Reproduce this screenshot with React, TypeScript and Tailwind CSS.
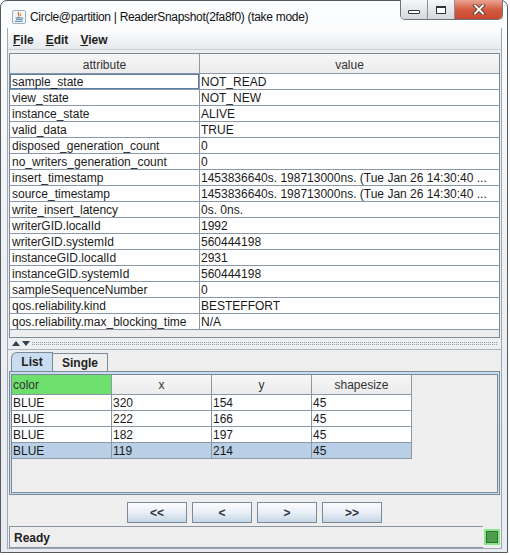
import React from 'react'

// attribute/value pairs of the snapshot
const attributes: [string, string][] = [
  ['sample_state', 'NOT_READ'],
  ['view_state', 'NOT_NEW'],
  ['instance_state', 'ALIVE'],
  ['valid_data', 'TRUE'],
  ['disposed_generation_count', '0'],
  ['no_writers_generation_count', '0'],
  ['insert_timestamp', '1453836640s. 198713000ns. (Tue Jan 26 14:30:40 ...'],
  ['source_timestamp', '1453836640s. 198713000ns. (Tue Jan 26 14:30:40 ...'],
  ['write_insert_latency', '0s. 0ns.'],
  ['writerGID.localId', '1992'],
  ['writerGID.systemId', '560444198'],
  ['instanceGID.localId', '2931'],
  ['instanceGID.systemId', '560444198'],
  ['sampleSequenceNumber', '0'],
  ['qos.reliability.kind', 'BESTEFFORT'],
  ['qos.reliability.max_blocking_time', 'N/A'],
]

const samples = [
  { color: 'BLUE', x: 320, y: 154, size: 45 },
  { color: 'BLUE', x: 222, y: 166, size: 45 },
  { color: 'BLUE', x: 182, y: 197, size: 45 },
  { color: 'BLUE', x: 119, y: 214, size: 45 },
]

function JavaIcon() {
  return (
    <svg width="14" height="14" viewBox="0 0 14 14">
      <rect x="0.5" y="0.5" width="13" height="13" rx="1.5" fill="#f3f6fa" stroke="#9fb0c4" />
      <path d="M6.5 1.8 C4.8 3.4 8.2 4.4 6.3 6.6" stroke="#e2620c" strokeWidth="1.1" fill="none" />
      <path d="M8.6 3 C7.6 4 9.3 4.8 8.2 6" stroke="#e2620c" strokeWidth="0.9" fill="none" />
      <path d="M3.5 7.8 H9.5 M4 9.3 H9 M9.5 7.8 C11.2 7.8 11.2 9.6 9 9.8 M2.8 11.3 H10.8" stroke="#3f6d99" strokeWidth="0.9" fill="none" />
    </svg>
  )
}

function WindowButtons() {
  return (
    <div className="flex h-[20px] -mt-px rounded-b-[5px] border border-t-0 border-[#6f7378] overflow-hidden">
      <div className="w-[27px] flex items-end justify-center pb-[5px] bg-gradient-to-b from-[#f6f7f8] to-[#d3d8de] border-r border-[#8d9196]">
        <div className="w-[12px] h-[4px] border border-[#333] bg-white rounded-[1px]" />
      </div>
      <div className="w-[27px] flex items-center justify-center bg-gradient-to-b from-[#f6f7f8] to-[#d3d8de] border-r border-[#8d9196]">
        <div className="w-[10px] h-[8px] border border-t-2 border-[#333] bg-white" />
      </div>
      <div className="w-[47px] flex items-center justify-center bg-gradient-to-b from-[#eaa594] via-[#d45b43] to-[#c9482f]">
        <svg width="14" height="11" viewBox="0 0 14 11">
          <path d="M3 1.5 L11 9.5 M11 1.5 L3 9.5" stroke="#4a2a22" strokeWidth="3.6" strokeLinecap="square" />
          <path d="M3 1.5 L11 9.5 M11 1.5 L3 9.5" stroke="#ffffff" strokeWidth="2" strokeLinecap="square" />
        </svg>
      </div>
    </div>
  )
}

function MenuBar() {
  return (
    <div className="h-[22px] shrink-0 flex items-center gap-[12px] pl-[5px] pt-[2px] bg-gradient-to-b from-[#ffffff] to-[#e6e9ed] border-b border-[#c8cfd7] text-[12px] font-bold text-[#222]">
      <span><span className="underline">F</span>ile</span>
      <span><span className="underline">E</span>dit</span>
      <span><span className="underline">V</span>iew</span>
    </div>
  )
}

function AttributeTable() {
  return (
    <div className="mx-px mt-[3px] h-[285px] shrink-0 border border-[#7a8a99] bg-[#eeeeee] flex flex-col">
      <div className="h-[20px] flex border-b border-[#8a98a8] bg-gradient-to-b from-[#f7f7f7] to-[#ebebeb] text-[12px] text-[#333]">
        <div className="w-[190px] border-r border-[#8a98a8] flex items-center justify-center pt-[2px]">attribute</div>
        <div className="flex-1 flex items-center justify-center pt-[2px]">value</div>
      </div>
      <div className="bg-white">
        {attributes.map(([name, value], i) => (
          <div key={name} className="h-[16px] flex border-b border-[#8a98a8] text-[12px] leading-[15px] text-[#1a1a1a]">
            <div className={`w-[190px] border-r border-[#8a98a8] px-[2px] pt-px whitespace-nowrap overflow-hidden ${i === 0 ? 'shadow-[inset_0_0_0_1px_#5f7ea6]' : ''}`}>
              {name}
            </div>
            <div className="flex-1 px-[1px] pt-px whitespace-nowrap overflow-hidden">{value}</div>
          </div>
        ))}
      </div>
    </div>
  )
}

function Splitter() {
  return (
    <div className="h-[12px] shrink-0 flex items-center gap-[2px] px-[4px] border-b border-[#a9b4c0]">
      <svg width="8" height="5" viewBox="0 0 8 5" className="shrink-0">
        <path d="M0 5 L4 0 L8 5 Z" fill="#2f4058" />
      </svg>
      <svg width="8" height="5" viewBox="0 0 8 5" className="shrink-0">
        <path d="M0 0 L8 0 L4 5 Z" fill="#2f4058" />
      </svg>
      <div className="flex-1 h-[3px] border-y border-dotted border-[#8e9eb1]" />
    </div>
  )
}

function SampleTable() {
  const cell = 'w-[100px] border-r border-b border-[#8a98a8] px-[1px] pt-px whitespace-nowrap overflow-hidden'
  const head = 'w-[100px] border-r border-b border-[#8a98a8] bg-gradient-to-b from-[#f7f7f7] to-[#ebebeb] flex items-center justify-center pt-px'
  return (
    <div className="h-[119px] border border-[#7a8a99] bg-[#eeeeee] flex flex-col">
      <div className="h-[20px] shrink-0 flex w-[400px] text-[12px] text-[#333]">
        <div className="w-[100px] border-r border-b border-[#8a98a8] bg-[#6ddf6d] px-[1px] pt-px flex items-center">color</div>
        <div className={head}>x</div>
        <div className={head}>y</div>
        <div className={head}>shapesize</div>
      </div>
      {samples.map((s, i) => (
        <div key={i} className={`h-[16px] shrink-0 flex w-[400px] text-[12px] leading-[15px] text-[#1a1a1a] ${i === samples.length - 1 ? 'bg-[#b8cfe5]' : 'bg-white'}`}>
          <div className={cell}>{s.color}</div>
          <div className={cell}>{s.x}</div>
          <div className={cell}>{s.y}</div>
          <div className={cell}>{s.size}</div>
        </div>
      ))}
    </div>
  )
}

function Tabs() {
  return (
    <div className="mx-px shrink-0 flex flex-col">
      <div className="h-[21px] flex items-end pl-[2px] text-[12px] font-bold text-[#222]">
        <div className="w-[42px] h-[19px] rounded-tl-[6px] border border-b-0 border-[#7a8a99] bg-[#c8ddf2] flex items-center justify-center">
          List
        </div>
        <div className="w-[55px] h-[18px] border border-l-0 border-b-0 border-[#7a8a99] bg-[#eeeeee] flex items-center justify-center">
          Single
        </div>
      </div>
      <div className="border border-[#7a8a99] bg-[#c8ddf2] px-px pt-[2px] pb-px">
        <SampleTable />
      </div>
    </div>
  )
}

function NavButtons() {
  const btn =
    'w-[60px] h-[21px] border border-[#7a8a99] bg-gradient-to-b from-[#fbfcfe] via-[#e9eff6] to-[#c6d6e6] text-[12px] font-bold text-[#2b3340] flex items-center justify-center'
  return (
    <div className="h-[31px] shrink-0 flex justify-center gap-[5px] pt-[7px]">
      <button className={btn}>&lt;&lt;</button>
      <button className={btn}>&lt;</button>
      <button className={btn}>&gt;</button>
      <button className={btn}>&gt;&gt;</button>
    </div>
  )
}

function StatusBar() {
  return (
    <div className="h-[22px] shrink-0 flex items-stretch">
      <div className="flex-1 border-t border-l border-b border-[#8a95a1] ml-px flex items-center pl-[4px] pt-px text-[12px] font-bold text-[#222]">
        Ready
      </div>
      <div className="w-[17px] mr-px flex items-center justify-center">
        <div className="w-[16px] h-[16px] border-2 border-[#8be68b] bg-[#2f6f2f] p-px">
          <div className="w-full h-full bg-[#4f9d4f]" />
        </div>
      </div>
    </div>
  )
}

export default function App() {
  return (
    <div className="w-[510px] h-[555px] bg-white font-['Liberation_Sans',Arial,sans-serif]">
      <div className="w-[508px] h-[553px] border border-[#555a60] rounded-t-[7px] bg-gradient-to-b from-[#fcfdfe] via-[#eceff3] to-[#e8ecf0] flex flex-col">
        <div className="h-[27px] shrink-0 flex items-start">
          <div className="h-full flex items-center gap-[4px] pl-[11px] pt-[4px]">
            <JavaIcon />
            <span className="text-[12px] tracking-[-0.3px] text-[#111]">Circle@partition | ReaderSnapshot(2fa8f0) (take mode)</span>
          </div>
          <div className="ml-auto mr-[4px]">
            <WindowButtons />
          </div>
        </div>
        <div className="h-[521px] shrink-0 ml-[6px] mr-[5px] border-x border-b border-[#9ea8b3] bg-[#eeeeee] flex flex-col">
          <MenuBar />
          <AttributeTable />
          <Splitter />
          <Tabs />
          <NavButtons />
          <StatusBar />
        </div>
      </div>
    </div>
  )
}
